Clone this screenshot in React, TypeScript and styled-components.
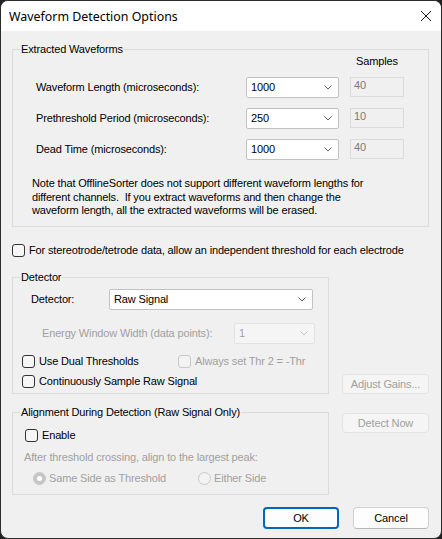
import React from "react";
import styled, { createGlobalStyle } from "styled-components";

const Global = createGlobalStyle`
  html, body { margin: 0; padding: 0; background: #202020; }
  body {
    font-family: "Liberation Sans", Arial, sans-serif;
    font-size: 11px;
    letter-spacing: -0.15px;
    color: #000;
  }
  * { box-sizing: border-box; }
`;

const Window = styled.div`
  width: 442px;
  height: 539px;
  background: #f0f0f0;
  border: 1px solid #2b2b2b;
  border-radius: 8px;
  overflow: hidden;
  display: flex;
  flex-direction: column;
`;

const TitleBar = styled.div`
  height: 30px;
  flex: none;
  background: #ffffff;
  display: flex;
  align-items: center;
  justify-content: space-between;
  padding: 0 9px 0 8px;
  font-family: "Noto Sans", "Open Sans", sans-serif;
  font-size: 12.4px;
  letter-spacing: 0;
  color: #000;
`;

const Body = styled.div`
  padding: 12px 12px 0 11px;
  display: flex;
  flex-direction: column;
`;

const Group = styled.fieldset`
  margin: 0;
  padding: 0;
  border: 1px solid #dcdcdc;
  min-width: 0;
`;

const Legend = styled.legend`
  margin-left: 7px;
  padding: 0 1px;
  line-height: 13px;
  font-size: 11px;
`;

const WaveGrid = styled.div`
  display: grid;
  grid-template-columns: 199px 93px 54px;
  column-gap: 11px;
  row-gap: 10px;
  padding-left: 23px;
  align-items: center;
`;

const SamplesHead = styled.div`
  grid-column: 3;
  height: 11px;
  line-height: 11px;
  padding-left: 6px;
`;

const Label = styled.span<{ $disabled?: boolean }>`
  line-height: 13px;
  white-space: nowrap;
  color: ${(p) => (p.$disabled ? "#a0a0a0" : "#000")};
`;

const ComboBox = styled.div<{ $w: number; $disabled?: boolean }>`
  width: ${(p) => p.$w}px;
  height: 21px;
  border: 1px solid ${(p) => (p.$disabled ? "#e3e3e3" : "#c2c2c2")};
  border-radius: 2px;
  background: ${(p) => (p.$disabled ? "#f5f5f5" : "#ffffff")};
  color: ${(p) => (p.$disabled ? "#a0a0a0" : "#000")};
  display: flex;
  align-items: center;
  justify-content: space-between;
  padding: 0 6px 0 4px;
  line-height: 13px;
`;

const Chevron = ({ color = "#606060" }: { color?: string }) => (
  <svg width="8" height="5" viewBox="0 0 8 5">
    <path d="M0.5 0.5 L4 4 L7.5 0.5" fill="none" stroke={color} strokeWidth="1" />
  </svg>
);

const Combo = ({ value, w, disabled }: { value: string; w: number; disabled?: boolean }) => (
  <ComboBox $w={w} $disabled={disabled}>
    <span>{value}</span>
    <Chevron color={disabled ? "#c4c4c4" : "#606060"} />
  </ComboBox>
);

const ReadField = styled.div`
  height: 20px;
  margin-top: -1px;
  border: 1px solid #dcdcdc;
  background: #f0f0f0;
  color: #7a7a7a;
  line-height: 13px;
  padding: 1px 0 0 3px;
`;

const Note = styled.div`
  margin: 17px 0 0 0;
  padding: 0 0 8px 19px;
  line-height: 13.5px;
`;

const CheckRow = styled.div<{ $mt?: number }>`
  display: flex;
  align-items: center;
  gap: 4px;
  height: 13px;
  margin-top: ${(p) => p.$mt ?? 0}px;
`;

const Box = styled.span<{ $disabled?: boolean }>`
  width: 13px;
  height: 13px;
  flex: none;
  border: 1px solid ${(p) => (p.$disabled ? "#c8c8c8" : "#333333")};
  border-radius: 3px;
  background: ${(p) => (p.$disabled ? "#f3f3f3" : "#f6f6f6")};
`;

const Check = ({ label, disabled, mt }: { label: string; disabled?: boolean; mt?: number }) => (
  <CheckRow $mt={mt}>
    <Box $disabled={disabled} />
    <Label $disabled={disabled}>{label}</Label>
  </CheckRow>
);

const Lower = styled.div`
  display: grid;
  grid-template-columns: 317px 87px;
  column-gap: 13px;
  row-gap: 12px;
  margin-top: 14px;
`;

const DetectorBody = styled.div`
  padding: 5px 0 5px 0;
  display: flex;
  flex-direction: column;
`;

const FormRow = styled.div<{ $pl: number; $lw: number; $mt?: number }>`
  display: grid;
  grid-template-columns: ${(p) => p.$lw}px auto;
  align-items: center;
  padding-left: ${(p) => p.$pl}px;
  margin-top: ${(p) => p.$mt ?? 0}px;
`;

const SideButton = styled.div<{ $end?: boolean }>`
  align-self: ${(p) => (p.$end ? "end" : "start")};
  margin-top: ${(p) => (p.$end ? 0 : 7)}px;
  height: 20px;
  border: 1px solid #e3e3e3;
  border-radius: 4px;
  background: #f5f5f5;
  color: #a0a0a0;
  display: flex;
  align-items: center;
  justify-content: center;
`;

const AlignBody = styled.div`
  padding: 10px 0 9px 0;
  display: flex;
  flex-direction: column;
`;

const Hint = styled.div`
  padding-left: 11px;
  margin-top: 9px;
  line-height: 13px;
  color: #a0a0a0;
`;

const RadioItem = styled.div`
  display: flex;
  align-items: center;
  gap: 3px;
  height: 13px;
`;

const RadioDot = styled.span<{ $on?: boolean }>`
  width: 13px;
  height: 13px;
  flex: none;
  border-radius: 50%;
  border: 1px solid #c8c8c8;
  background: ${(p) => (p.$on ? "#c6c6c6" : "#f3f3f3")};
  display: flex;
  align-items: center;
  justify-content: center;
  &::after {
    content: "";
    display: ${(p) => (p.$on ? "block" : "none")};
    width: 5px;
    height: 5px;
    border-radius: 50%;
    background: #ffffff;
  }
`;

const Radio = ({ label, on }: { label: string; on?: boolean }) => (
  <RadioItem>
    <RadioDot $on={on} />
    <Label $disabled>{label}</Label>
  </RadioItem>
);

const Footer = styled.div`
  display: flex;
  justify-content: flex-end;
  gap: 14px;
  margin-top: 12px;
`;

const DlgButton = styled.div<{ $primary?: boolean }>`
  width: 76px;
  height: 22px;
  border-radius: 4px;
  background: #fdfdfd;
  border: ${(p) => (p.$primary ? "2px solid #0067c0" : "1px solid #d0d0d0")};
  border-bottom-color: ${(p) => (p.$primary ? "#0067c0" : "#b8b8b8")};
  display: flex;
  align-items: center;
  justify-content: center;
  color: #000;
`;

export default function App() {
  return (
    <>
      <Global />
      <Window>
        <TitleBar>
          <span>Waveform Detection Options</span>
          <svg width="12" height="12" viewBox="0 0 12 12">
            <path d="M1 1 L11 11 M11 1 L1 11" stroke="#1a1a1a" strokeWidth="1" fill="none" />
          </svg>
        </TitleBar>
        <Body>
          <Group>
            <Legend>Extracted Waveforms</Legend>
            <WaveGrid>
              <SamplesHead>Samples</SamplesHead>
              <Label>Waveform Length (microseconds):</Label>
              <Combo value="1000" w={93} />
              <ReadField>40</ReadField>
              <Label>Prethreshold Period (microseconds):</Label>
              <Combo value="250" w={93} />
              <ReadField>10</ReadField>
              <Label>Dead Time (microseconds):</Label>
              <Combo value="1000" w={93} />
              <ReadField>40</ReadField>
            </WaveGrid>
            <Note>
              Note that OfflineSorter does not support different waveform lengths for
              <br />
              different channels.&nbsp; If you extract waveforms and then change the
              <br />
              waveform length, all the extracted waveforms will be erased.
            </Note>
          </Group>

          <Check mt={17} label="For stereotrode/tetrode data, allow an independent threshold for each electrode" />

          <Lower>
            <Group>
              <Legend>Detector</Legend>
              <DetectorBody>
                <FormRow $pl={18} $lw={78}>
                  <Label>Detector:</Label>
                  <Combo value="Raw Signal" w={204} />
                </FormRow>
                <FormRow $pl={29} $lw={192} $mt={13}>
                  <Label $disabled>Energy Window Width (data points):</Label>
                  <Combo value="1" w={81} disabled />
                </FormRow>
                <FormRow $pl={9} $lw={156} $mt={11}>
                  <Check label="Use Dual Thresholds" />
                  <Check label="Always set Thr 2 = -Thr" disabled />
                </FormRow>
                <FormRow $pl={9} $lw={156} $mt={7}>
                  <Check label="Continuously Sample Raw Signal" />
                </FormRow>
              </DetectorBody>
            </Group>
            <SideButton $end>Adjust Gains...</SideButton>

            <Group>
              <Legend>Alignment During Detection (Raw Signal Only)</Legend>
              <AlignBody>
                <FormRow $pl={12} $lw={200}>
                  <Check label="Enable" />
                </FormRow>
                <Hint>After threshold crossing, align to the largest peak:</Hint>
                <FormRow $pl={20} $lw={165} $mt={8}>
                  <Radio label="Same Side as Threshold" on />
                  <Radio label="Either Side" />
                </FormRow>
              </AlignBody>
            </Group>
            <SideButton>Detect Now</SideButton>
          </Lower>

          <Footer>
            <DlgButton $primary>OK</DlgButton>
            <DlgButton>Cancel</DlgButton>
          </Footer>
        </Body>
      </Window>
    </>
  );
}
